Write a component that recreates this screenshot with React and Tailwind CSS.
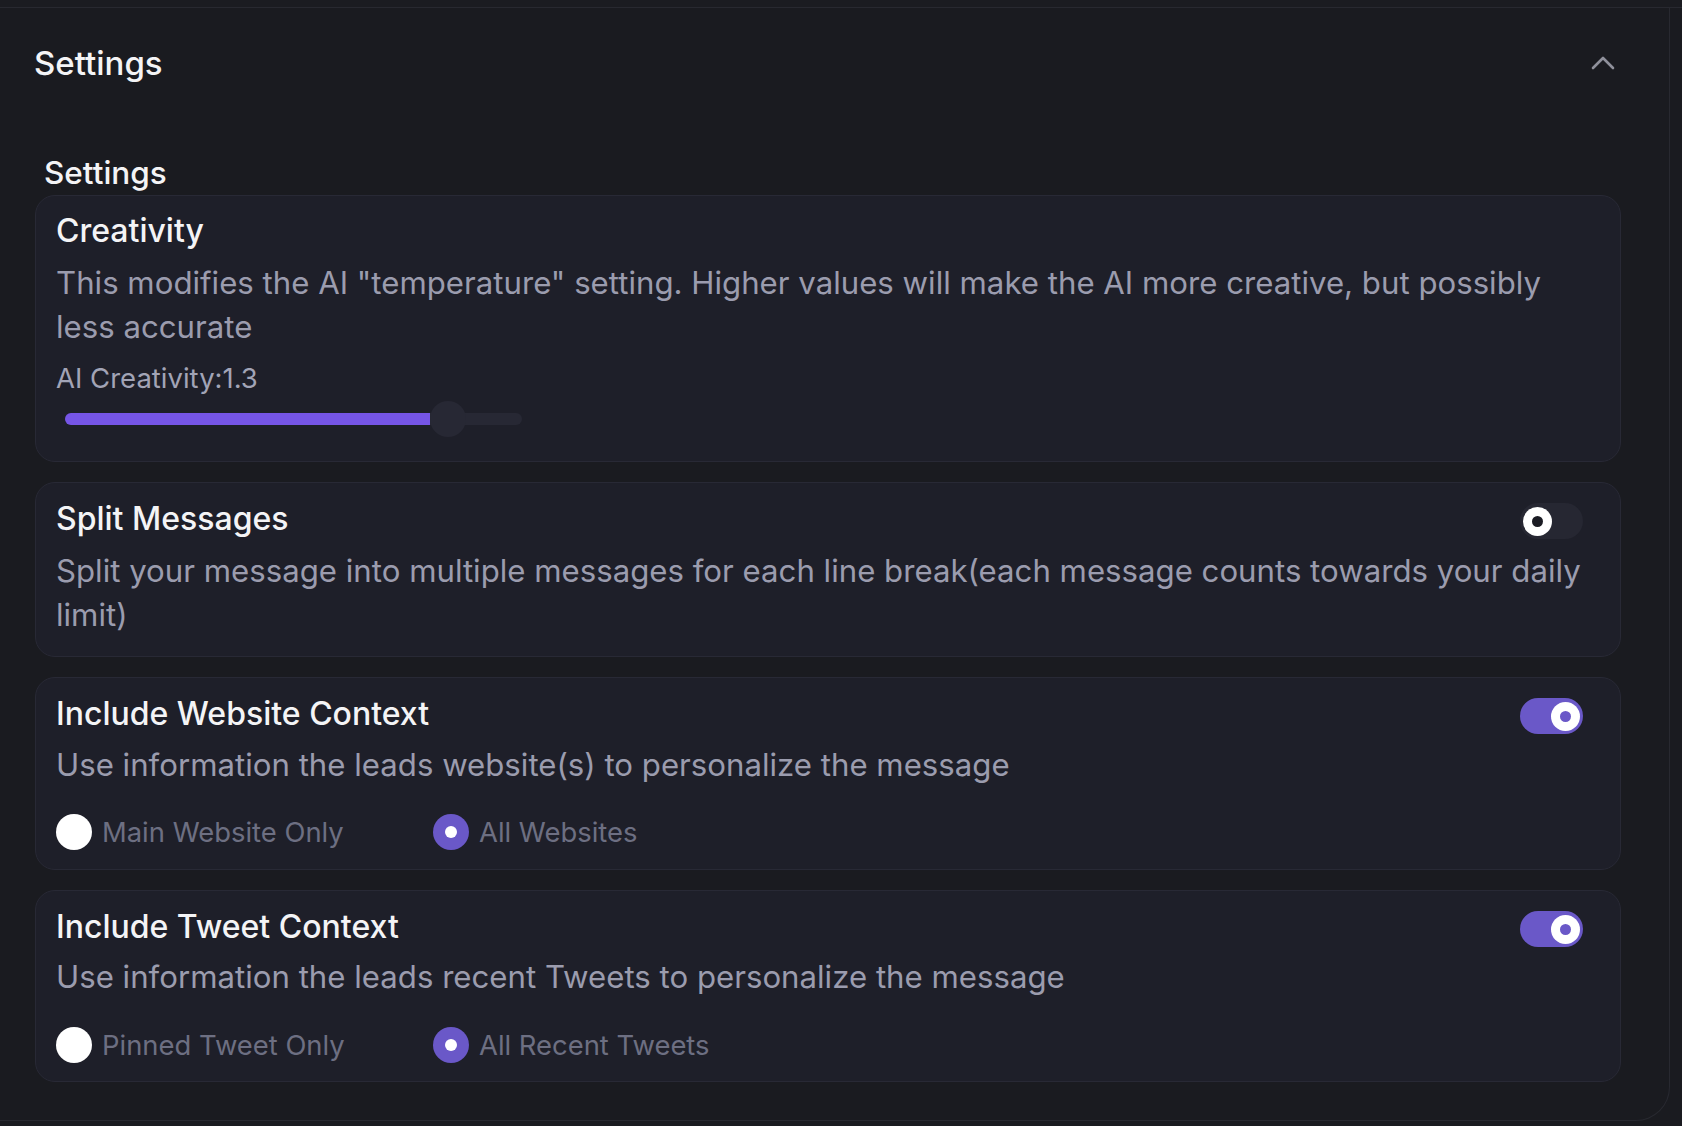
import React from "react";

function Toggle({ on }) {
  return (
    <div
      className={
        "mt-[4px] shrink-0 w-[63px] h-[36px] rounded-full flex items-center px-[3px] " +
        (on ? "bg-[#6a58c8] justify-end" : "bg-[#262732] justify-start")
      }
    >
      <div className="w-[29px] h-[29px] rounded-full bg-white flex items-center justify-center">
        <div
          className={
            "w-[11px] h-[11px] rounded-full " + (on ? "bg-[#6a58c8]" : "bg-[#1b1c24]")
          }
        />
      </div>
    </div>
  );
}

function Radio({ checked, label, wide }) {
  return (
    <div className={"flex items-center gap-[10px] " + (wide ? "w-[377px]" : "")}>
      {checked ? (
        <div className="w-[36px] h-[36px] rounded-full bg-[#6a58c8] flex items-center justify-center">
          <div className="w-[12px] h-[12px] rounded-full bg-white" />
        </div>
      ) : (
        <div className="w-[36px] h-[36px] rounded-full bg-white" />
      )}
      <span className="text-[27.4px] leading-[36px] text-[#6d6f82]">{label}</span>
    </div>
  );
}

function Card({ children, top = "pt-[15px]" }) {
  return (
    <div className={"rounded-[20px] border border-[#282935] bg-[#1e1f29] pl-[20px] pr-[37px] " + top}>
      {children}
    </div>
  );
}

function Title({ children }) {
  return (
    <div className="text-[32px] leading-[40px] font-medium text-[#f4f4f6]">{children}</div>
  );
}

function Desc({ children, mt = "mt-[10px]" }) {
  return (
    <div className={"text-[31.2px] leading-[44px] text-[#9b9cae] " + mt}>{children}</div>
  );
}

export default function App() {
  return (
    <div className="w-[1682px] h-[1126px] overflow-hidden bg-[#1a1b20] font-['Inter','Noto_Sans',sans-serif] antialiased">
      <div className="h-[8px] border-b border-[#282930] bg-[#1b1c21]" />
      <div className="w-[1670px] h-[1113px] border-r border-b border-[#282930] rounded-br-[34px] pr-[48px]">
        <div className="flex items-center justify-between pt-[34px] pl-[34px] pr-[6px]">
          <div className="text-[33px] leading-[42px] font-medium text-[#f4f4f6]">Settings</div>
          <svg width="24" height="14" viewBox="0 0 24 14" fill="none">
            <path
              d="M2 12 L12 2 L22 12"
              stroke="#8f909b"
              strokeWidth="2.6"
              strokeLinecap="round"
              strokeLinejoin="round"
            />
          </svg>
        </div>

        <div className="mt-[69px] pl-[44px] text-[31.5px] leading-[40px] font-medium text-[#f4f4f6]">
          Settings
        </div>

        <div className="mt-[2px] pl-[35px] flex flex-col gap-[20px]">
          <Card>
            <Title>Creativity</Title>
            <Desc>
              This modifies the AI "temperature" setting. Higher values will make the AI more
              creative, but possibly less accurate
            </Desc>
            <div className="mt-[11px] text-[27.5px] leading-[36px] text-[#a2a4b6]">
              AI Creativity:1.3
            </div>
            <div className="mt-[5px] h-[36px] w-[466px] pl-[9px] flex items-center">
              <div className="relative w-[457px] h-[12px] rounded-full bg-[#272834]">
                <div className="absolute left-0 top-0 h-[12px] w-[365px] rounded-l-full bg-[#7655e6]" />
                <div className="absolute left-[365px] top-[-12px] w-[36px] h-[36px] rounded-full bg-[#272834]" />
              </div>
            </div>
            <div className="h-[24px]" />
          </Card>

          <Card top="pt-[16px]">
            <div className="flex items-start justify-between">
              <Title>Split Messages</Title>
              <Toggle on={false} />
            </div>
            <Desc>
              Split your message into multiple messages for each line break(each message counts
              towards your daily limit)
            </Desc>
            <div className="h-[19px]" />
          </Card>

          <Card top="pt-[16px]">
            <div className="flex items-start justify-between">
              <Title>Include Website Context</Title>
              <Toggle on={true} />
            </div>
            <Desc mt="mt-[9px]">Use information the leads website(s) to personalize the message</Desc>
            <div className="mt-[27px] flex items-center">
              <Radio checked={false} label="Main Website Only" wide />
              <Radio checked={true} label="All Websites" />
            </div>
            <div className="h-[19px]" />
          </Card>

          <Card top="pt-[16px]">
            <div className="flex items-start justify-between">
              <Title>Include Tweet Context</Title>
              <Toggle on={true} />
            </div>
            <Desc mt="mt-[8px]">Use information the leads recent Tweets to personalize the message</Desc>
            <div className="mt-[28px] flex items-center">
              <Radio checked={false} label="Pinned Tweet Only" wide />
              <Radio checked={true} label="All Recent Tweets" />
            </div>
            <div className="h-[18px]" />
          </Card>
        </div>
      </div>
    </div>
  );
}
